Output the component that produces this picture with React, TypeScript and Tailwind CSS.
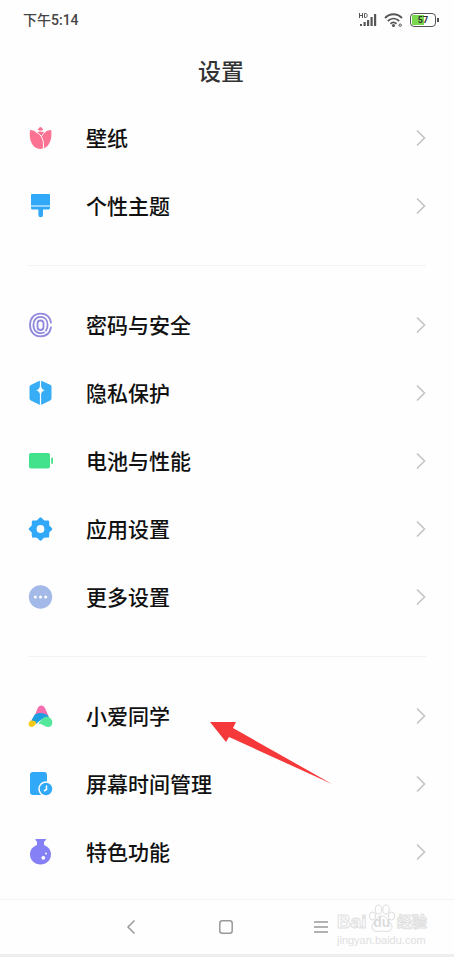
import React from "react";

interface Item {
  label: string;
  icon: React.ReactNode;
  marked?: boolean;
}

const Tulip = () => (
  <svg viewBox="0 0 26 26" className="size-[26px]">
    <path d="M3 5c3 .2 5 1.200 6.900 2.500 1.100-.7 2.300-1 3.600-1s2.500.3 3.600 1C19 6.200 21.300 5.200 24.200 5 25.500 14.500 22 24 13.500 24S1.700 14.500 3 5z" fill="#fb7293" />
    <path d="M8.500 6.800c6.500 2.700 9 8.900 7.600 17.200M19 6.500c-2 1.200-3.300 2.700-4.200 4.500" fill="none" stroke="#fff" strokeWidth="1" />
    <path d="M10.800 4.400c.9-.4 1.500-2.400 2.700-2.400s1.800 2 2.700 2.400c-.5 1-1.500 1.200-2.700 1.200s-2.200-.2-2.700-1.200z" fill="#fb7293" />
  </svg>
);

const Brush = () => (
  <svg viewBox="0 0 26 26" className="size-[26px]" fill="#31a8f8">
    <path d="M5 1h17a1 1 0 0 1 1 1v10.500H4V2a1 1 0 0 1 1-1z" />
    <path d="M4 13.500h19V15a1.500 1.500 0 0 1-1.500 1.500H16V22a2.300 2.300 0 0 1-4.600 0v-5.500H5.500A1.500 1.500 0 0 1 4 15z" />
  </svg>
);

const Fingerprint = () => (
  <svg viewBox="0 0 26 26" className="size-[26px]" fill="none" stroke="#8f88dc" strokeWidth="1.800" strokeLinecap="round">
    <path d="M24 10.500C23 5 19 1.700 13.500 1.700 7 1.700 3 6.500 3 13s4 11.300 10.500 11.300c5.500 0 9.500-3.300 10.500-8.800" />
    <path d="M17 20.500C10.500 23 6.400 18.500 6.400 13c0-5 2.900-8.100 7.100-8.100s7.100 3.100 7.100 8.100c0 2.400-.6 4.200-1.700 5.600" />
    <rect x="10.500" y="8.500" width="6" height="9.500" rx="3" />
  </svg>
);

const Shield = () => (
  <svg viewBox="0 0 26 26" className="size-[26px]">
    <path d="M11.500 1.300 4.300 4.700A2.500 2.500 0 0 0 2.500 6.900v11.300c0 1 .5 1.800 1.300 2.200l7.700 3.800a4 4 0 0 0 4 0l7.700-3.800c.8-.4 1.300-1.200 1.300-2.200V6.900c0-1-.5-1.800-1.300-2.200l-7.700-3.400a4 4 0 0 0-4 0z" fill="#36adf5" />
    <path d="M12.900 0h1.200v6.300c.4 2.500 1.600 3.400 3.900 3.900-2.300.5-3.500 1.900-3.900 3.900V26h-1.200V14.100c-.4-2-1.600-3.400-3.900-3.900 2.300-.5 3.500-1.400 3.900-3.900z" fill="#fff" />
  </svg>
);

const Battery = () => (
  <svg viewBox="0 0 26 26" className="size-[26px]" fill="#42e28c">
    <rect x="2" y="5" width="21" height="15.500" rx="2" />
    <rect x="24.200" y="9.500" width="1.800" height="6.500" rx="0.900" />
  </svg>
);

const Gear = () => (
  <svg viewBox="0 0 26 26" className="size-[26px]">
    <path d="M13.500 2.200 16.600 5.200 21.100 5.400 21.300 9.900 24.300 13 21.300 16.100 21.100 20.600 16.600 20.800 13.500 23.800 10.400 20.800 5.900 20.600 5.700 16.100 2.700 13 5.700 9.900 5.900 5.400 10.400 5.200z" fill="#31a8f8" stroke="#31a8f8" strokeWidth="2" strokeLinejoin="round" />
    <circle cx="13.500" cy="13" r="3.900" fill="#fff" />
  </svg>
);

const More = () => (
  <svg viewBox="0 0 26 26" className="size-[26px]">
    <circle cx="13.500" cy="13" r="11.700" fill="#a3bae9" />
    <g fill="#fff">
      <circle cx="8.300" cy="13" r="1.500" />
      <circle cx="13.500" cy="13" r="1.500" />
      <circle cx="18.700" cy="13" r="1.500" />
    </g>
  </svg>
);

const XiaoAi = () => (
  <svg viewBox="0 0 26 26" className="size-[26px]">
    <path d="M8 12 10.500 5.500c1.700-3.900 6-3.900 7.700 0l3.300 7.500c-4-1.500-8.500-2-13.500-1z" fill="#f56fae" />
    <path d="M7.700 11.500c4-2.500 9.500-2 13.300 1l2.500 5-9-1-5.500 4.500-5.500-2z" fill="#1d9ee0" />
    <path d="M15.500 15.500c2.700-2.700 6.800-2.500 9 1 2 3.800.3 7.500-3.400 7.500-3.600 0-5.300-3.300-9.600-3.200 1.200-1.800 2.500-3.800 4-5.300z" fill="#55e79b" />
    <path d="M3.100 17.800c1.700-.9 4.900-.1 6.100 1.500-.4 2.500-2 4.700-4.600 4.700-2.700 0-3.500-2.400-2.700-4.200z" fill="#f7ca18" />
  </svg>
);

const ScreenTime = () => (
  <svg viewBox="0 0 26 26" className="size-[26px]">
    <rect x="3" y="1" width="17" height="23" rx="3" fill="#31a8f8" />
    <circle cx="19" cy="18" r="7" fill="#31a8f8" stroke="#fff" strokeWidth="1.500" />
    <path d="M19.500 14.500v4l-2.500 1.500" fill="none" stroke="#fff" strokeWidth="1.500" />
  </svg>
);

const Flask = () => (
  <svg viewBox="0 0 26 28" className="h-7 w-[26px]">
    <path d="M9 1h9.500c.6 0 .7.700.3 1.100L17 4v3c4.200 1.500 7 5 7 9.300 0 6-4.500 10.200-10.500 10.200S3 22.300 3 16.300C3 12 5.800 8.500 10 7V4L8.600 2.100C8.300 1.700 8.400 1 9 1z" fill="#8580f5" />
    <circle cx="16.300" cy="19.800" r="1.900" fill="#fff" />
    <circle cx="19" cy="15.500" r="1" fill="#fff" />
  </svg>
);

const groups: Item[][] = [
  [
    { label: "壁纸", icon: <Tulip /> },
    { label: "个性主题", icon: <Brush /> },
  ],
  [
    { label: "密码与安全", icon: <Fingerprint /> },
    { label: "隐私保护", icon: <Shield /> },
    { label: "电池与性能", icon: <Battery /> },
    { label: "应用设置", icon: <Gear /> },
    { label: "更多设置", icon: <More /> },
  ],
  [
    { label: "小爱同学", icon: <XiaoAi />, marked: true },
    { label: "屏幕时间管理", icon: <ScreenTime /> },
    { label: "特色功能", icon: <Flask /> },
  ],
];

const StatusBar = () => (
  <div className="flex h-10 items-center justify-between pr-[15px] pl-[23px] text-sm font-medium text-[#444]">
    <span>下午5:14</span>
    <div className="flex items-center gap-1.5">
      <svg viewBox="0 0 20 16" className="h-4 w-5" fill="#555">
        <g stroke="#555" fill="none" strokeWidth="1">
          <path d="M1.500 1v5M4.500 1v5M1.500 3.500h3M6.500 1.500v4h1.200c2 0 2-4 0-4z" />
        </g>
        <rect x="2" y="12" width="2" height="2" />
        <rect x="5.500" y="10" width="2.200" height="4" />
        <rect x="9" y="8" width="2.200" height="6" />
        <rect x="12.500" y="5" width="2.200" height="9" />
        <rect x="16" y="2" width="2.200" height="12" />
      </svg>
      <svg viewBox="0 0 20 16" className="h-4 w-5" fill="none" stroke="#555" strokeWidth="1.800">
        <path d="M1 6c5-5 12-5 17 0M3.800 9c3.500-3.200 8-3.200 11.400 0M6.500 11.700c2-1.700 4-1.700 6 0" />
        <circle cx="9.500" cy="13.500" r="0.700" />
        <circle cx="16.200" cy="13.200" r="1.200" strokeWidth="1" />
      </svg>
      <div className="flex items-center gap-px">
        <div className="flex h-3.5 w-[26px] items-center justify-center rounded border border-[#555] bg-white p-px text-[9px] leading-[10px] font-bold text-[#333]">
          <span className="w-full bg-linear-to-r from-[#7bd94f] from-55% to-white to-55% text-center">57</span>
        </div>
        <div className="h-1 w-0.5 bg-[#555]" />
      </div>
    </div>
  </div>
);

const Watermark = () => (
  <div className="absolute top-1 right-[27px] w-[90px] font-['Liberation_Sans','Noto_Sans_CJK_SC',sans-serif] text-white">
    <div className="flex h-7 items-end justify-between">
      <span className="text-[19px] leading-5 font-bold [-webkit-text-stroke:1px_#e0e0e0]">Bai</span>
      <div className="relative flex h-7 w-7 shrink-0 items-end justify-center">
        <svg viewBox="0 0 28 28" className="absolute inset-0" fill="#fff" stroke="#dcdcdc">
          <ellipse cx="4.500" cy="12" rx="3.200" ry="4" />
          <ellipse cx="10.500" cy="5.500" rx="3.200" ry="4.500" />
          <ellipse cx="18" cy="5.500" rx="3.200" ry="4.500" />
          <ellipse cx="23.500" cy="12" rx="3.200" ry="4" />
          <path d="M14 12c4 0 5.500 4 8 6.500 4 4 1.500 9-3 9-2 0-3-.5-5-.5s-3 .5-5 .5c-4.500 0-7-5-3-9C8.500 16 10 12 14 12z" />
        </svg>
        <span className="relative text-sm leading-5 font-bold text-[#dcdcdc]">du</span>
      </div>
      <span className="text-[15px] leading-5 font-bold whitespace-nowrap [-webkit-text-stroke:1px_#e0e0e0]">经验</span>
    </div>
    <div className="text-[11px] leading-4 whitespace-nowrap text-[#e0e0e0]">jingyan.baidu.com</div>
  </div>
);

const App: React.FC = () => {
  return (
    <div className="bg-[#fefefe] font-[Roboto,'Noto_Sans_CJK_SC',sans-serif]">
      <StatusBar />
      <h1 className="flex h-16 items-center justify-center pt-0.5 pr-3 text-[23px] font-medium text-[#333]">设置</h1>
      <main className="pb-[13px]">
        {groups.map((group, i) => (
          <React.Fragment key={i}>
            {i > 0 && <hr className="mx-7 my-[25px] border-[#f3f3f3]" />}
            <ul>
              {group.map((item) => (
                <li key={item.label} className="relative">
                  <button className="flex h-[68px] w-full items-center pr-7 pl-[27px] text-left">
                    {item.icon}
                    <span className="ml-[33px] flex-1 pt-1 text-[21px] font-medium text-[#111]">{item.label}</span>
                    <svg viewBox="0 0 10 18" className="h-[18px] w-2.5" fill="none" stroke="#c4c4c4" strokeWidth="1.600">
                      <path d="M1 1.500 8.500 9 1 16.500" />
                    </svg>
                  </button>
                  {item.marked && (
                    <svg viewBox="0 0 122 62" className="absolute top-10 left-[210px] z-10 h-[62px] w-[122px]" fill="#f5393b">
                      <path d="M0 0h26l-3 6 99 56L19 15l-3 5z" />
                    </svg>
                  )}
                </li>
              ))}
            </ul>
          </React.Fragment>
        ))}
      </main>
      <nav className="relative flex h-[58px] items-center justify-center gap-[75px] border-t border-b-3 border-t-[#f3f3f3] border-b-[#eee] pr-0.5">
        <button aria-label="返回" className="flex w-5 justify-center">
          <svg viewBox="0 0 10 16" className="h-4 w-2.5" fill="none" stroke="#999" strokeWidth="1.500">
            <path d="M8.500 1.500 2 8l6.500 6.500" />
          </svg>
        </button>
        <button aria-label="主屏幕" className="flex w-5 justify-center">
          <svg viewBox="0 0 14 14" className="size-3.5" fill="none" stroke="#999" strokeWidth="1.500">
            <rect x="0.800" y="0.800" width="12.400" height="12.400" rx="2.500" />
          </svg>
        </button>
        <button aria-label="菜单" className="flex w-5 justify-center">
          <svg viewBox="0 0 14 14" className="size-3.5" stroke="#999" strokeWidth="1.400">
            <path d="M0 2h14M0 7h14M0 12h14" />
          </svg>
        </button>
        <Watermark />
      </nav>
    </div>
  );
};

export default App;
